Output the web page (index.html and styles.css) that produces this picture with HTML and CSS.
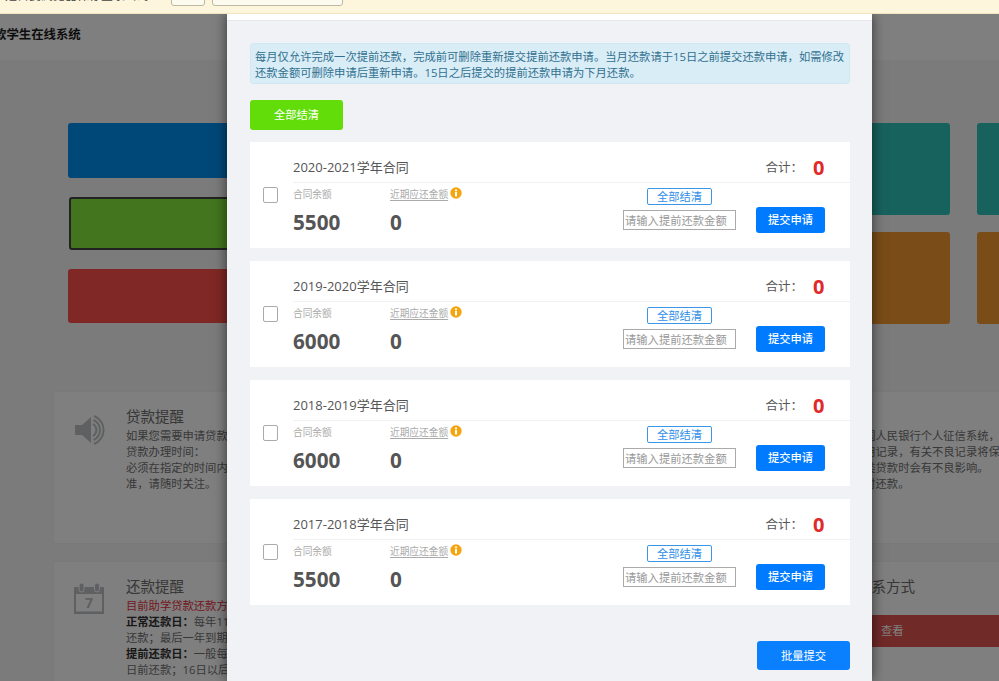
FILE: index.html
```html
<!DOCTYPE html>
<html lang="zh-CN">

<head>
    <meta charset="UTF-8">
    <title>学生在线系统</title>
    <link rel="stylesheet" href="styles.css">
</head>

<body>
    <div class="notice-bar">
        <span class="notice-text">是否要浏览器保存登录密码</span>
        <span class="notice-btn notice-btn-small"></span>
        <span class="notice-btn notice-btn-wide"></span>
    </div>

    <div class="stage">
        <div class="page">
            <div class="page-head">
                <span class="brand">款学生在线系统</span>
            </div>

            <div class="tiles">
                <div class="tile-col tile-col-wide">
                    <div class="tile tile-blue"></div>
                    <div class="tile tile-green"></div>
                    <div class="tile tile-red"></div>
                </div>
                <div class="tile-col">
                    <div class="tile tile-tall tile-teal"></div>
                    <div class="tile tile-tall tile-orange"></div>
                </div>
                <div class="tile-col">
                    <div class="tile tile-tall tile-teal"></div>
                    <div class="tile tile-tall tile-orange"></div>
                </div>
            </div>

            <div class="info-row info-row-first">
                <div class="info-card info-card-a">
                    <svg class="info-icon" viewBox="0 0 32 30" width="32" height="30">
                        <path d="M2 10h7l9-8v26l-9-8H2z" fill="#bcc0c4" />
                        <path d="M20 9a7 7 0 0 1 0 12" fill="none" stroke="#bcc0c4" stroke-width="2" />
                        <path d="M20.500 5a11 11 0 0 1 0 20" fill="none" stroke="#bcc0c4" stroke-width="2" />
                        <path d="M21 1a15 15 0 0 1 0 28" fill="none" stroke="#bcc0c4" stroke-width="2" />
                    </svg>
                    <div class="info-body">
                        <h3 class="info-title">贷款提醒</h3>
                        <p class="info-text">如果您需要申请贷款，请及时与学校资助中心联系并提交相关的申请材料。<br>贷款办理时间：<br>必须在指定的时间内办理完成，具体办理时间以学校的通知为<br>准，请随时关注。</p>
                    </div>
                </div>
                <div class="info-card info-card-b">
                    <div class="info-body">
                        <h3 class="info-title">信用提醒</h3>
                        <p class="info-text">您的助学贷款违约信息都将按时按规定报送至中国人民银行个人征信系统，<br>因此请您务必按时足额还款并保持良好的个人信用记录，有关不良记录将保留五年，<br>如有逾期还款记录，今后您再申请房贷等其他各类贷款时会有不良影响。<br>因此，请您一定务必在规定的每期还款日期内及时还款。</p>
                    </div>
                </div>
            </div>

            <div class="info-row">
                <div class="info-card info-card-c">
                    <svg class="info-icon info-icon-cal" viewBox="0 0 32 32" width="32" height="32">
                        <path d="M1 5h30v27H1z" fill="#bcc0c4" />
                        <path d="M3 12h26v17.500H3z" fill="#fff" />
                        <rect x="6" y="1" width="5" height="9" rx="2.500" fill="#bcc0c4" stroke="#fff" />
                        <rect x="21.500" y="1" width="5" height="9" rx="2.500" fill="#bcc0c4" stroke="#fff" />
                        <text x="16" y="26" text-anchor="middle" class="cal-day">7</text>
                    </svg>
                    <div class="info-body">
                        <h3 class="info-title">还款提醒</h3>
                        <p class="info-text"><span class="text-red">目前助学贷款还款方式为按年还款，请关注每年的还款日期。</span><br><b>正常还款日：</b>每年11月至12月之间系统会自动扣款，请提前<br>还款；最后一年到期的合同请按时还清全部贷款。<br><b>提前还款日：</b>一般每月1日至15日申请，次月20日为<br>日前还款；16日以后申请的将顺延到下一个月处理。</p>
                    </div>
                </div>
                <div class="info-card info-card-d">
                    <div class="info-body">
                        <h3 class="info-title">联系方式</h3>
                        <div class="contact-bar">查看</div>
                    </div>
                </div>
            </div>
        </div>

        <div class="mask"></div>

        <div class="modal">
            <div class="modal-top"></div>
            <div class="modal-body">
                <div class="tip">每月仅允许完成一次提前还款，完成前可删除重新提交提前还款申请。当月还款请于15日之前提交还款申请，如需修改还款金额可删除申请后重新申请。15日之后提交的提前还款申请为下月还款。</div>
                <a class="btn btn-green" href="javascript:;">全部结清</a>

                <div class="contract">
                    <div class="contract-check"><span class="checkbox"></span></div>
                    <div class="contract-main">
                        <div class="contract-head">
                            <span class="contract-name">2020-2021学年合同</span>
                            <span class="contract-total">合计：<em>0</em></span>
                        </div>
                        <div class="contract-row">
                            <div class="stat stat-first">
                                <span class="stat-label">合同余额</span>
                                <span class="stat-num">5500</span>
                            </div>
                            <div class="stat">
                                <span class="stat-label"><u>近期应还金额</u><svg class="tip-icon" viewBox="0 0 12 12" width="12" height="12"><circle cx="6" cy="6" r="5.700" fill="#f5a50f" /><rect x="5" y="5" width="2" height="4.500" fill="#fff" /><rect x="5" y="2.500" width="2" height="1.700" fill="#fff" /></svg></span>
                                <span class="stat-num">0</span>
                            </div>
                            <div class="pay-box">
                                <a class="btn-line" href="javascript:;">全部结清</a>
                                <input class="pay-input" type="text" placeholder="请输入提前还款金额">
                            </div>
                            <a class="btn btn-blue" href="javascript:;">提交申请</a>
                        </div>
                    </div>
                </div>

                <div class="contract">
                    <div class="contract-check"><span class="checkbox"></span></div>
                    <div class="contract-main">
                        <div class="contract-head">
                            <span class="contract-name">2019-2020学年合同</span>
                            <span class="contract-total">合计：<em>0</em></span>
                        </div>
                        <div class="contract-row">
                            <div class="stat stat-first">
                                <span class="stat-label">合同余额</span>
                                <span class="stat-num">6000</span>
                            </div>
                            <div class="stat">
                                <span class="stat-label"><u>近期应还金额</u><svg class="tip-icon" viewBox="0 0 12 12" width="12" height="12"><circle cx="6" cy="6" r="5.700" fill="#f5a50f" /><rect x="5" y="5" width="2" height="4.500" fill="#fff" /><rect x="5" y="2.500" width="2" height="1.700" fill="#fff" /></svg></span>
                                <span class="stat-num">0</span>
                            </div>
                            <div class="pay-box">
                                <a class="btn-line" href="javascript:;">全部结清</a>
                                <input class="pay-input" type="text" placeholder="请输入提前还款金额">
                            </div>
                            <a class="btn btn-blue" href="javascript:;">提交申请</a>
                        </div>
                    </div>
                </div>

                <div class="contract">
                    <div class="contract-check"><span class="checkbox"></span></div>
                    <div class="contract-main">
                        <div class="contract-head">
                            <span class="contract-name">2018-2019学年合同</span>
                            <span class="contract-total">合计：<em>0</em></span>
                        </div>
                        <div class="contract-row">
                            <div class="stat stat-first">
                                <span class="stat-label">合同余额</span>
                                <span class="stat-num">6000</span>
                            </div>
                            <div class="stat">
                                <span class="stat-label"><u>近期应还金额</u><svg class="tip-icon" viewBox="0 0 12 12" width="12" height="12"><circle cx="6" cy="6" r="5.700" fill="#f5a50f" /><rect x="5" y="5" width="2" height="4.500" fill="#fff" /><rect x="5" y="2.500" width="2" height="1.700" fill="#fff" /></svg></span>
                                <span class="stat-num">0</span>
                            </div>
                            <div class="pay-box">
                                <a class="btn-line" href="javascript:;">全部结清</a>
                                <input class="pay-input" type="text" placeholder="请输入提前还款金额">
                            </div>
                            <a class="btn btn-blue" href="javascript:;">提交申请</a>
                        </div>
                    </div>
                </div>

                <div class="contract">
                    <div class="contract-check"><span class="checkbox"></span></div>
                    <div class="contract-main">
                        <div class="contract-head">
                            <span class="contract-name">2017-2018学年合同</span>
                            <span class="contract-total">合计：<em>0</em></span>
                        </div>
                        <div class="contract-row">
                            <div class="stat stat-first">
                                <span class="stat-label">合同余额</span>
                                <span class="stat-num">5500</span>
                            </div>
                            <div class="stat">
                                <span class="stat-label"><u>近期应还金额</u><svg class="tip-icon" viewBox="0 0 12 12" width="12" height="12"><circle cx="6" cy="6" r="5.700" fill="#f5a50f" /><rect x="5" y="5" width="2" height="4.500" fill="#fff" /><rect x="5" y="2.500" width="2" height="1.700" fill="#fff" /></svg></span>
                                <span class="stat-num">0</span>
                            </div>
                            <div class="pay-box">
                                <a class="btn-line" href="javascript:;">全部结清</a>
                                <input class="pay-input" type="text" placeholder="请输入提前还款金额">
                            </div>
                            <a class="btn btn-blue" href="javascript:;">提交申请</a>
                        </div>
                    </div>
                </div>

                <div class="modal-foot">
                    <a class="btn btn-batch" href="javascript:;">批量提交</a>
                </div>
            </div>
        </div>
    </div>
</body>

</html>
```

FILE: styles.css
```css
* {
    margin: 0;
    padding: 0;
    box-sizing: border-box;
}

html,
body {
    height: 681px;
    overflow: hidden;
}

body {
    font-family: "Open Sans", "Noto Sans CJK SC", sans-serif;
    font-size: 11.3px;
    color: #666;
    background-color: #f6f7f9;
}

a {
    text-decoration: none;
}

/* top notice, only its lower edge is on screen */
.notice-bar {
    position: relative;
    z-index: 5;
    height: 14px;
    display: flex;
    align-items: flex-end;
    overflow: hidden;
    padding: 0 0 7px 5px;
    background-color: #fdf6dc;
    border-bottom: 1px solid #efe6bd;
}

.notice-text {
    width: 166px;
    flex: none;
    font-size: 12px;
    line-height: 14px;
    margin-bottom: 3px;
    color: #444;
    white-space: nowrap;
    overflow: hidden;
}

.notice-btn {
    flex: none;
    height: 20px;
    background-color: #fdfaf0;
    border: 1px solid #bdb8a4;
    border-radius: 3px;
}

.notice-btn-small {
    width: 34px;
}

.notice-btn-wide {
    width: 131px;
    margin-left: 7px;
}

.stage {
    position: relative;
    height: 667px;
    overflow: hidden;
}

.page {
    width: 1300px;
}

.page-head {
    height: 46px;
    background-color: #fff;
    padding-top: 10px;
}

.brand {
    display: block;
    margin-left: -6px;
    font-size: 12.400px;
    line-height: 22px;
    font-weight: 700;
    color: #1a1a1a;
}

.tiles {
    display: grid;
    grid-template-columns: 400px 455px 200px;
    column-gap: 27px;
    margin: 63px 0 0 68px;
}

.tile-col {
    display: flex;
    flex-direction: column;
    gap: 17px;
}

.tile-col-wide {
    gap: 19px;
}

.tile {
    height: 54px;
    border-radius: 3px;
}

.tile-tall {
    height: 92px;
}

.tile-blue {
    height: 55px;
    background-color: #0090f0;
}

.tile-green {
    height: 53px;
    margin-left: 1px;
    background-color: #84ea3c;
    border: 2px solid #444;
}

.tile-red {
    background-color: #ff504a;
}

.tile-teal {
    background-color: #30c4bc;
}

.tile-orange {
    background-color: #f59a30;
}

.info-row {
    display: flex;
    margin: 17px 0 0 53px;
}

.info-row-first {
    margin-top: 67px;
}

.info-card {
    display: flex;
    height: 153px;
    padding: 14px 0 0 19px;
    background-color: #fff;
    border: 1px solid #f3f3f3;
    white-space: nowrap;
    overflow: hidden;
}

.info-card-a {
    width: 467px;
}

.info-card-b {
    width: 600px;
    margin-left: 18px;
    padding-left: 88px;
}

.info-card-c {
    width: 707px;
}

.info-card-d {
    width: 400px;
    margin-left: 18px;
    padding-left: 78px;
}

.info-icon {
    flex: none;
    margin: 9px 21px 0 0;
}

.info-icon-cal {
    margin-top: 6px;
}

.cal-day {
    font-size: 14px;
    font-weight: 700;
    fill: #bcc0c4;
}

.info-body {
    flex: 1;
}

.info-title {
    font-size: 14.500px;
    line-height: 22px;
    font-weight: 400;
    color: #6e6e6e;
}

.info-text {
    line-height: 16px;
    color: #707070;
}

.info-text b {
    color: #303030;
}

.text-red {
    color: #e83040;
}

.contact-bar {
    height: 32px;
    margin-top: 17px;
    padding-left: 24px;
    line-height: 32px;
    color: #fff;
    background-color: #e0544f;
}

.mask {
    position: absolute;
    left: 0;
    top: 0;
    right: 0;
    bottom: 0;
    background-color: rgba(0, 0, 0, 0.5);
}

.modal {
    position: absolute;
    left: 227px;
    top: 0;
    bottom: 0;
    width: 645px;
    background-color: #f0f2f5;
    box-shadow: 0 0 12px rgba(0, 0, 0, 0.6);
}

.modal-top {
    height: 7px;
    background-color: #fff;
    border-bottom: 1px solid #e6e8ea;
}

.modal-body {
    padding: 22px 22px 0 23px;
}

.tip {
    height: 41px;
    padding: 5px 4px;
    line-height: 16px;
    color: #31708f;
    background-color: #d9edf7;
    border: 1px solid #d0e8f2;
    border-radius: 3px;
}

.btn {
    display: block;
    text-align: center;
    color: #fff;
    border-radius: 3px;
}

.btn-green {
    width: 93px;
    height: 30px;
    margin: 16px 0 12px;
    line-height: 30px;
    background-color: #62dd0a;
}

.contract {
    display: flex;
    height: 106px;
    margin-bottom: 13px;
    background-color: #fff;
}

.contract-check {
    flex: none;
    width: 43px;
    padding: 45px 0 0 13px;
}

.checkbox {
    display: block;
    width: 15px;
    height: 16px;
    background-color: #fff;
    border: 1px solid #aaa;
    border-radius: 2px;
}

.contract-main {
    flex: 1;
}

.contract-head {
    display: flex;
    align-items: center;
    justify-content: space-between;
    height: 41px;
    padding: 9px 25px 0 0;
    border-bottom: 1px solid #f0f1f3;
}

.contract-name {
    font-size: 13px;
    color: #555;
}

.contract-total {
    font-size: 12.500px;
    color: #555;
    display: flex;
    align-items: center;
}

.contract-total em {
    width: 12px;
    margin: 2px 0 0 10px;
    font-size: 20px;
    line-height: 22px;
    font-style: normal;
    font-weight: 700;
    color: #e02a2a;
}

.contract-row {
    display: flex;
    padding-right: 25px;
}

.stat {
    flex: 1;
    display: flex;
    flex-direction: column;
}

.stat-first {
    flex: none;
    width: 97px;
}

.stat-label {
    display: flex;
    align-items: center;
    height: 21px;
    font-size: 9.700px;
    color: #aaa;
}

.stat-label u {
    text-underline-offset: 2px;
}

.tip-icon {
    margin: -2px 0 0 2px;
}

.stat-num {
    margin-top: 5px;
    font-size: 20.700px;
    line-height: 26px;
    font-weight: 700;
    color: #555;
}

.pay-box {
    flex: none;
    width: 113px;
    display: flex;
    flex-direction: column;
    align-items: center;
    padding-top: 5px;
}

.btn-line {
    width: 65px;
    height: 17px;
    text-align: center;
    line-height: 15px;
    color: #2f8fe8;
    border: 1px solid #3b96e8;
    border-radius: 2px;
}

.pay-input {
    width: 113px;
    height: 20px;
    margin-top: 5px;
    padding: 0 1px;
    font-family: inherit;
    font-size: 11.300px;
    border: 1px solid #aaa;
    outline: none;
}

.pay-input::placeholder {
    color: #999;
}

.btn-blue {
    flex: none;
    width: 69px;
    height: 26px;
    margin: 24px 0 0 20px;
    line-height: 26px;
    font-weight: 500;
    background-color: #007bff;
}

.modal-foot {
    display: flex;
    justify-content: flex-end;
    margin-top: 36px;
}

.btn-batch {
    width: 93px;
    height: 29px;
    line-height: 29px;
    background-color: #0a80ff;
}
```
